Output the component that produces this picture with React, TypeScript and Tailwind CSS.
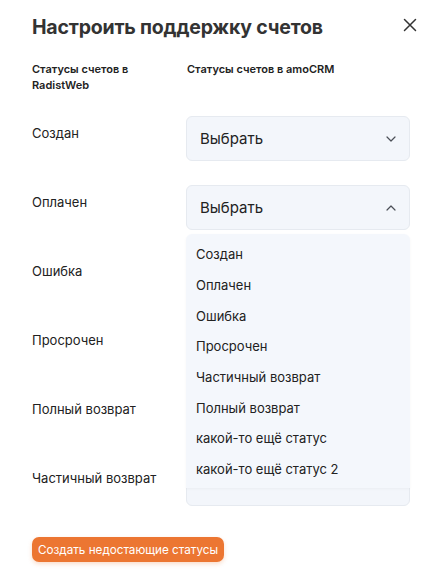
import React from "react";

const rows = ["Создан", "Оплачен", "Ошибка", "Просрочен", "Полный возврат", "Частичный возврат"];
const options = [
  "Создан",
  "Оплачен",
  "Ошибка",
  "Просрочен",
  "Частичный возврат",
  "Полный возврат",
  "какой-то ещё статус",
  "какой-то ещё статус 2",
  "какой-то ещё статус 3",
];

function Chevron({ up }: { up?: boolean }) {
  return (
    <svg width="10" height="6" viewBox="0 0 10 6" fill="none" className="shrink-0">
      <path
        d={up ? "M1 5L5 1L9 5" : "M1 1L5 5L9 1"}
        stroke="#4b4f57"
        strokeWidth="1.2"
        strokeLinecap="round"
        strokeLinejoin="round"
      />
    </svg>
  );
}

export default function App() {
  return (
    <div
      className="w-[448px] h-[578px] bg-white relative overflow-hidden text-[#222]"
      style={{ fontFamily: "Inter, 'Noto Sans', sans-serif" }}
    >
      <div className="pl-[32px] pr-[38px] pt-[13px]">
        <div className="flex items-start justify-between">
          <h1 className="text-[19.5px] leading-[28px] font-bold text-[#333] tracking-[-0.2px]">
            Настроить поддержку счетов
          </h1>
          <button className="mt-[4px] mr-[-8px] w-[16px] h-[16px] flex items-center justify-center">
            <svg width="14" height="14" viewBox="0 0 14 14" fill="none">
              <path d="M1.5 1.5L12.5 12.5M12.5 1.5L1.5 12.5" stroke="#333" strokeWidth="1.5" strokeLinecap="round" />
            </svg>
          </button>
        </div>

        <div className="flex mt-[20px] text-[11px] leading-[16px] font-semibold text-[#222]">
          <div className="w-[155px] pr-[20px]">Статусы счетов в RadistWeb</div>
          <div>Статусы счетов в amoCRM</div>
        </div>

        <div className="flex flex-col gap-[24px] mt-[23px] relative">
          {rows.map((r, i) => (
            <div key={r} className="flex items-start">
              <div className="w-[154px] pt-[8px] text-[13px] leading-[18px]">{r}</div>
              <div className="w-[224px] h-[45px] rounded-[6px] bg-[#f3f6fb] border border-[#e6eaf0] flex items-center justify-between pl-[13px] pr-[13px]">
                {i < 2 && (
                  <>
                    <span className="text-[15px] leading-[20px] text-[#222]">Выбрать</span>
                    <Chevron up={i === 1} />
                  </>
                )}
              </div>
            </div>
          ))}

          <div className="absolute left-[154px] top-[118px] w-[224px] h-[254px] rounded-t-[6px] bg-[#f4f7fc] overflow-hidden shadow-[0_1px_3px_rgba(0,0,0,0.04)]">
            <div className="pt-[5px]">
              {options.map((o) => (
                <div key={o} className="h-[30.7px] flex items-center pl-[10px] text-[13px] leading-[18px] text-[#222]">
                  {o}
                </div>
              ))}
            </div>
          </div>
        </div>

        <button className="mt-[31px] h-[25px] px-[6px] rounded-[7px] bg-[#ec7632] text-white text-[11.7px] leading-[16px] shadow-[0_2px_4px_rgba(236,118,50,0.25)]">
          Создать недостающие статусы
        </button>
      </div>
    </div>
  );
}
